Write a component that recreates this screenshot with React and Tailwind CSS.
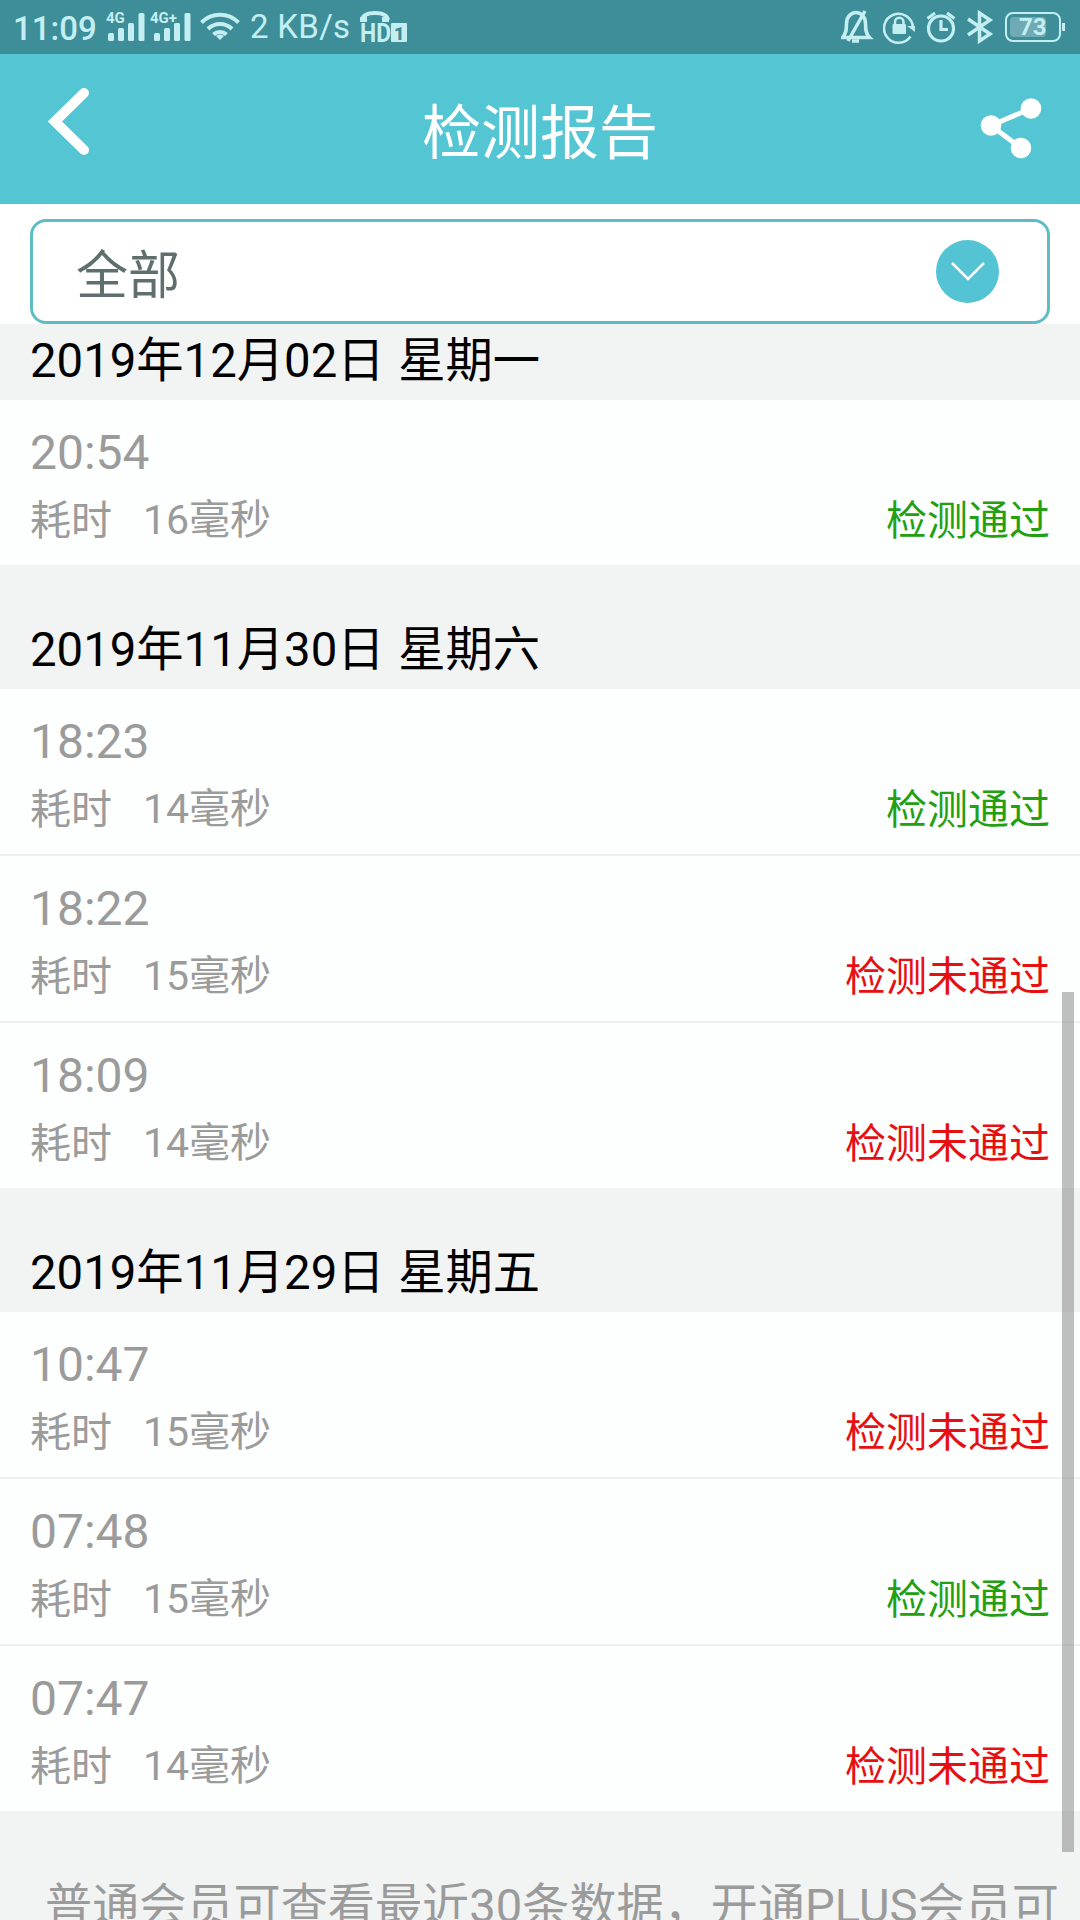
import { useState } from "react";

const GROUPS = [
  {
    date: "2019年12月02日 星期一",
    records: [{ time: "20:54", cost: 16, passed: true }],
  },
  {
    date: "2019年11月30日 星期六",
    records: [
      { time: "18:23", cost: 14, passed: true },
      { time: "18:22", cost: 15, passed: false },
      { time: "18:09", cost: 14, passed: false },
    ],
  },
  {
    date: "2019年11月29日 星期五",
    records: [
      { time: "10:47", cost: 15, passed: false },
      { time: "07:48", cost: 15, passed: true },
      { time: "07:47", cost: 14, passed: false },
    ],
  },
];

export default function App() {
  const [filter] = useState("全部");

  return (
    <div className="relative w-[1080px] h-[1920px] overflow-hidden bg-[#f2f3f3] flex flex-col font-['Roboto','Noto_Sans_CJK_SC',sans-serif]">
      <StatusBar />
      <header className="h-[150px] shrink-0 bg-[#54c5d3] flex items-center justify-between pl-[48px] pr-[38px]">
        <button aria-label="back" className="w-[90px] pb-[17px]">
          <svg width="42" height="68" viewBox="0 0 42 68" fill="none" stroke="#fff" strokeWidth="10">
            <path d="M36 6 7 34.500l29 28.500" strokeLinecap="round" />
          </svg>
        </button>
        <h1 className="text-[59px] leading-[80px] text-white pt-[10px]">检测报告</h1>
        <button aria-label="share" className="w-[100px] flex justify-end pb-[3px]">
          <svg width="62" height="62" viewBox="0 0 62 62" fill="#fff">
            <path d="M11 28.500 51 11.500M11 28.500 41 51" stroke="#fff" strokeWidth="5" />
            <circle cx="11" cy="28.500" r="10.300" />
            <circle cx="51" cy="11.500" r="10.300" />
            <circle cx="41" cy="51" r="10.300" />
          </svg>
        </button>
      </header>

      <div className="h-[120px] shrink-0 bg-white px-[30px] pt-[15px]">
        <button className="w-full h-[105px] border-[3px] border-[#5fbcc4] rounded-2xl bg-white flex items-center justify-between pl-[43px] pr-[48px] text-[52px] text-[#5f6f6e]">
          <span className="leading-[76px] pt-[11px]">{filter}</span>
          <span className="w-[63px] h-[63px] mb-px rounded-full bg-[#54c3d3] flex items-center justify-center">
            <svg width="34" height="20" viewBox="0 0 34 20" fill="none" stroke="#fff" strokeWidth="2.500">
              <path d="m1 2 16 16L33 2" />
            </svg>
          </span>
        </button>
      </div>

      <main className="flex-1">
        {GROUPS.map((group, i) => (
          <section key={group.date}>
            <h2 className={`px-[30px] flex items-end text-[47.300px] leading-[77px] [word-spacing:2px] text-black ${i === 0 ? "h-[76px]" : "h-[124px]"}`}>
              {group.date}
            </h2>
            <ul className="divide-y-2 divide-[#eef0f0] bg-[#fdfefe]">
              {group.records.map((r) => (
                <Record key={r.time} {...r} />
              ))}
            </ul>
          </section>
        ))}
        <p className="pl-[45px] pt-[60px] text-[47.150px] leading-[70px] text-[#9b9b9b] whitespace-nowrap">
          普通会员可查看最近30条数据，开通PLUS会员可
        </p>
      </main>

      {/* scroll thumb floats over the list */}
      <div className="absolute left-[1062px] top-[992px] w-[12px] h-[860px] bg-[#808080]/50" />
    </div>
  );
}

function Record({ time, cost, passed }) {
  return (
    <li className="box-content h-[165px] px-[30px]">
      <p className="pt-[22px] text-[48px] leading-[62px] text-[#9b9b9b]">{time}</p>
      <div className="flex justify-between text-[41px] leading-[72px]">
        <p className="flex gap-[31px] text-[#9b9b9b]">
          <span className="pt-px">耗时</span>
          <span>{cost}毫秒</span>
        </p>
        <p className={`pt-px ${passed ? "text-[#22a012]" : "text-[#e60f12]"}`}>{passed ? "检测通过" : "检测未通过"}</p>
      </div>
    </li>
  );
}

function Signal({ label, width, shift }) {
  return (
    <svg width={width} height="54" viewBox={`0 0 ${width} 54`} fill="#c3eef2">
      <rect x={shift} y="33" width="6" height="8" rx="1.500" />
      <rect x={shift + 10} y="28" width="6" height="13" rx="1.500" />
      <rect x={shift + 20} y="23" width="6" height="18" rx="1.500" />
      <rect x={shift + 30.5} y="13" width="6" height="28" rx="1.500" />
      <text x="0" y="23" fontSize="15" fontWeight="700" fontFamily="Roboto" stroke="#3d8e99" strokeWidth="2" paintOrder="stroke">{label}</text>
    </svg>
  );
}

function StatusBar() {
  return (
    <div className="h-[54px] shrink-0 bg-[#3d8e99] text-[#c3eef2] flex items-center justify-between pl-[13px] pr-[15px]">
      <div className="flex items-center">
        <span className="w-[93px] text-[33px] leading-[54px] pt-[3px] font-medium">11:09</span>
        <Signal label="4G" width={44} shift={2} />
        <Signal label="4G+" width={49} shift={4} />
        <svg width="42" height="54" viewBox="0 0 42 54" fill="none" stroke="#c3eef2" strokeWidth="4">
          <path d="M2.500 22.500a26 26 0 0 1 37 0M9 29a17 17 0 0 1 24 0M14.500 34.500a9.500 9.500 0 0 1 13 0" />
          <path d="m21 40-4-4a6 6 0 0 1 8 0Z" fill="#c3eef2" stroke="none" />
        </svg>
        <span className="w-[119px] pl-[9px] text-[33px] leading-[54px] tracking-[0.300px] whitespace-nowrap">2 KB/s</span>
        <svg width="48" height="54" viewBox="0 0 48 54" fill="#c3eef2">
          <path d="M2 20c1-5 7-7 13-7s12 2 13 7" fill="none" stroke="#c3eef2" strokeWidth="4" />
          <path d="M0 17h7v5H0zM22 17h7v5h-7z" />
          <text x="0" y="42" fontSize="25" fontWeight="700" fontFamily="Roboto" textLength="31" lengthAdjust="spacingAndGlyphs">HD</text>
          <rect x="31" y="23" width="16" height="19" rx="1" />
          <text x="34" y="39.500" fontSize="18" fontWeight="900" fontFamily="Roboto" fill="#3d8e99">1</text>
        </svg>
      </div>
      <div className="flex items-center">
        <svg width="42" height="54" viewBox="0 0 42 54" fill="none" stroke="#c3eef2" strokeWidth="3.500">
          <path d="M1.500 37.500h27c-4-4-4-9-4-14 0-6-4-11-9.500-11s-9.500 5-9.500 11c0 5 0 10-4 14ZM7 41 24 11" />
          <path d="M11 41h7" />
        </svg>
        <svg width="43" height="54" viewBox="0 0 43 54" fill="none" stroke="#c3eef2" strokeWidth="2.500">
          <path d="M27.500 36.500a14.500 14.500 0 1 1 2.500-9" />
          <path d="m24 26 8 6v-6Z" fill="#c3eef2" stroke="none" />
          <rect x="9.500" y="24" width="13.500" height="10" rx="1" fill="#c3eef2" stroke="none" />
          <path d="M12 25v-3a4 4 0 0 1 8.500 0v3" />
        </svg>
        <svg width="41" height="54" viewBox="0 0 41 54" fill="none" stroke="#c3eef2" strokeWidth="3.200">
          <circle cx="15" cy="28.500" r="12.500" />
          <path d="M15 20v9.500h7M1.500 18.500l7.500-5.500M21 13l7.500 5.500" />
        </svg>
        <svg width="38" height="54" viewBox="0 0 38 54" fill="none" stroke="#c3eef2" strokeWidth="3.500">
          <path d="m1 19 22 15-10.500 7V13L23 20 1 35" />
        </svg>
        <div className="w-[56px] h-[30px] border-2 border-[#c3eef2] rounded-lg p-[3px]">
          <div className="w-[36px] h-full bg-[#6fabb4] rounded-sm">
            <span className="block pl-[9px] w-[45px] text-[24px] leading-[21px] font-bold">73</span>
          </div>
        </div>
        <div className="w-[3px] h-[8px] ml-px bg-[#c3eef2]" />
      </div>
    </div>
  );
}
